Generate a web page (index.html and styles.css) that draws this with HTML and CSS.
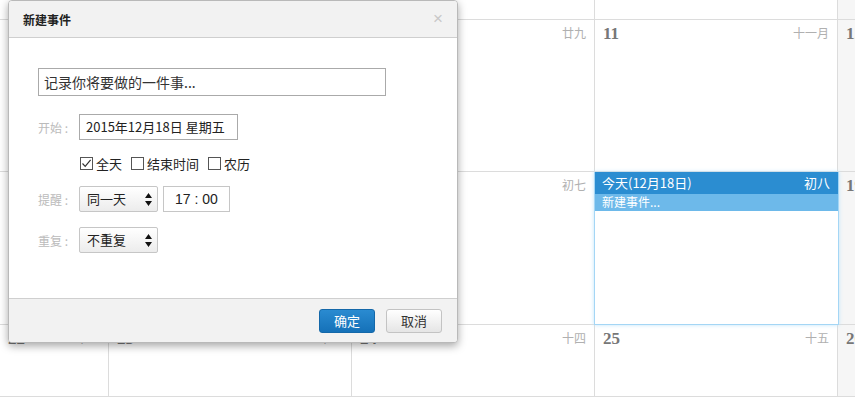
FILE: index.html
```html
<!DOCTYPE html>
<html lang="zh-CN">
<head>
    <meta charset="UTF-8">
    <title>日历</title>
    <link rel="stylesheet" href="styles.css">
</head>
<body>
    <div class="calendar">
        <!-- row 0 (cut off at top) -->
        <div class="cell"></div>
        <div class="cell"></div>
        <div class="cell"></div>
        <div class="cell"></div>
        <div class="cell weekend"></div>

        <!-- row 1 -->
        <div class="cell"><span class="day">8</span><span class="lunar">廿七</span></div>
        <div class="cell"><span class="day">9</span><span class="lunar">廿八</span></div>
        <div class="cell"><span class="day">10</span><span class="lunar">廿九</span></div>
        <div class="cell"><span class="day">11</span><span class="lunar">十一月</span></div>
        <div class="cell weekend"><span class="day">12</span><span class="lunar">初二</span></div>

        <!-- row 2 -->
        <div class="cell"><span class="day">15</span><span class="lunar">初五</span></div>
        <div class="cell"><span class="day">16</span><span class="lunar">初六</span></div>
        <div class="cell"><span class="day">17</span><span class="lunar">初七</span></div>
        <div class="cell today">
            <div class="today-head"><span>今天(12月18日)</span><span>初八</span></div>
            <div class="today-event">新建事件...</div>
        </div>
        <div class="cell weekend"><span class="day">19</span><span class="lunar">初九</span></div>

        <!-- row 3 -->
        <div class="cell"><span class="day">22</span><span class="lunar">十二</span></div>
        <div class="cell"><span class="day">23</span><span class="lunar">十三</span></div>
        <div class="cell"><span class="day">24</span><span class="lunar">十四</span></div>
        <div class="cell"><span class="day">25</span><span class="lunar">十五</span></div>
        <div class="cell weekend"><span class="day">26</span><span class="lunar">十六</span></div>
    </div>

    <div class="dialog">
        <div class="dialog-head">
            <span class="dialog-title">新建事件</span>
            <span class="dialog-close">&#215;</span>
        </div>
        <div class="dialog-body">
            <div class="field-title">记录你将要做的一件事...</div>

            <div class="row">
                <span class="label">开始 :</span>
                <div class="field-date">2015年12月18日 星期五</div>
            </div>

            <div class="row checks">
                <span class="check">
                    <span class="box">
                        <svg width="11" height="11" viewBox="0 0 11 11"><path d="M1.5 5.5 L4.2 8.3 L9.6 1.8" fill="none" stroke="#333" stroke-width="1.2"/></svg>
                    </span>全天
                </span>
                <span class="check"><span class="box"></span>结束时间</span>
                <span class="check"><span class="box"></span>农历</span>
            </div>

            <div class="row">
                <span class="label">提醒 :</span>
                <div class="select">同一天
                    <svg class="arrows" width="7" height="13" viewBox="0 0 7 13"><path d="M0 5 L3.5 0 L7 5 Z M0 8 L3.5 13 L7 8 Z" fill="#111"/></svg>
                </div>
                <div class="field-time">17 : 00</div>
            </div>

            <div class="row">
                <span class="label">重复 :</span>
                <div class="select">不重复
                    <svg class="arrows" width="7" height="13" viewBox="0 0 7 13"><path d="M0 5 L3.5 0 L7 5 Z M0 8 L3.5 13 L7 8 Z" fill="#111"/></svg>
                </div>
            </div>
        </div>
        <div class="dialog-foot">
            <button class="btn btn-primary">确定</button>
            <button class="btn">取消</button>
        </div>
    </div>
</body>
</html>
```

FILE: styles.css
```css
body {
    margin: 0;
    font-family: "Noto Sans CJK SC", "Liberation Sans", sans-serif;
    background-color: #fff;
    overflow: hidden;
}

/* calendar grid behind the dialog */
.calendar {
    display: grid;
    grid-template-columns: 109px 243px 243px 243px 1fr;
    grid-template-rows: 20px 152px 153px 1fr;
    width: 855px;
    height: 397px;
}
.cell {
    box-sizing: border-box;
    border-right: 1px solid #dcdcdc;
    border-bottom: 1px solid #dcdcdc;
    display: flex;
    justify-content: space-between;
    align-items: flex-start;
    padding: 4px 8px 0 8px;
}
.cell.weekend {
    background-color: #f6f6f6;
    border-right: none;
}
.day {
    font-family: "Liberation Serif", serif;
    font-weight: bold;
    font-size: 17px;
    line-height: 20px;
    color: #777;
}
.lunar {
    font-size: 12px;
    line-height: 18px;
    color: #b0b0b0;
}
.today {
    display: block;
    padding: 0;
    position: relative;
    z-index: 1;
    border: 1px solid #a4d6f5;
    border-top: none;
    margin: 0 -1px 0 -1px;
    box-shadow: 0 0 4px #bfe4fa;
}
.today-head {
    display: flex;
    justify-content: space-between;
    height: 22px;
    line-height: 22px;
    padding: 0 8px 0 7px;
    background-color: #2b8dd1;
    color: #fff;
    font-size: 13px;
}
.today-event {
    height: 17px;
    line-height: 16px;
    padding: 0 7px;
    background-color: #6db9ea;
    color: #fff;
    font-size: 12px;
}

/* dialog */
.dialog {
    position: absolute;
    left: 8px;
    top: 0;
    width: 450px;
    height: 343px;
    box-sizing: border-box;
    display: flex;
    flex-direction: column;
    background-color: #fff;
    border: 1px solid #b9b9b9;
    border-radius: 4px;
    box-shadow: 0 3px 9px rgba(0, 0, 0, 0.35);
    z-index: 5;
    overflow: hidden;
}
.dialog-head {
    display: flex;
    justify-content: space-between;
    align-items: center;
    height: 36px;
    padding: 0 14px 0 14px;
    background-color: #f2f2f2;
    border-bottom: 1px solid #cfcfcf;
}
.dialog-title {
    font-size: 12px;
    font-weight: bold;
    color: #222;
}
.dialog-close {
    font-family: "Liberation Sans", sans-serif;
    font-size: 17px;
    color: #c8c8c8;
}
.dialog-body {
    flex: 1;
    padding: 30px 0 0 29px;
}
.field-title {
    box-sizing: border-box;
    width: 348px;
    height: 28px;
    line-height: 26px;
    padding: 0 5px;
    border: 1px solid #aaa;
    font-size: 14px;
    color: #333;
    margin-bottom: 18px;
}
.row {
    display: flex;
    align-items: center;
    margin-bottom: 15px;
}
.label {
    width: 41px;
    font-size: 12px;
    color: #bbb;
}
.field-date {
    box-sizing: border-box;
    width: 159px;
    height: 26px;
    line-height: 24px;
    padding: 0 6px;
    border: 1px solid #aaa;
    font-size: 13px;
    color: #222;
}
.checks {
    margin: 12px 0 15px 42px;
    height: 16px;
    gap: 9px;
}
.check {
    display: flex;
    align-items: center;
    font-size: 13px;
    color: #222;
}
.box {
    box-sizing: border-box;
    width: 13px;
    height: 13px;
    margin-right: 3px;
    border: 1px solid #555;
    display: flex;
    align-items: center;
    justify-content: center;
}
.select {
    box-sizing: border-box;
    position: relative;
    width: 79px;
    height: 26px;
    line-height: 24px;
    padding-left: 7px;
    border: 1px solid #c6c6c6;
    border-radius: 2px;
    background: linear-gradient(#ffffff, #ececec);
    font-size: 13px;
    color: #222;
}
.arrows {
    position: absolute;
    right: 5px;
    top: 6px;
}
.field-time {
    box-sizing: border-box;
    width: 67px;
    height: 26px;
    line-height: 24px;
    margin-left: 5px;
    border: 1px solid #c6c6c6;
    text-align: center;
    font-family: "Liberation Sans", sans-serif;
    font-size: 14px;
    color: #222;
}
.dialog-foot {
    display: flex;
    justify-content: flex-end;
    align-items: center;
    gap: 11px;
    height: 43px;
    padding-right: 15px;
    background-color: #f2f2f2;
    border-top: 1px solid #cfcfcf;
}
.btn {
    width: 56px;
    height: 24px;
    padding: 0;
    border: 1px solid #c3c3c3;
    border-radius: 3px;
    background: linear-gradient(#ffffff, #e5e5e5);
    font-family: "Noto Sans CJK SC", sans-serif;
    font-size: 13px;
    color: #333;
}
.btn-primary {
    border-color: #1468a9;
    background: linear-gradient(#2a8bd1, #1571b8);
    color: #fff;
}
```
